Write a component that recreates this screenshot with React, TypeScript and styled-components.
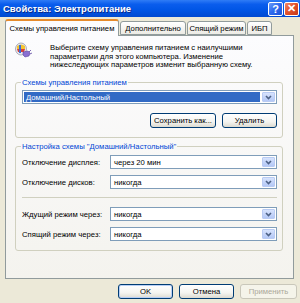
import React from 'react'
import styled, { createGlobalStyle } from 'styled-components'

const GlobalStyle = createGlobalStyle`
  html, body {
    margin: 0;
    padding: 0;
  }
  body {
    width: 300px;
    height: 303px;
    overflow: hidden;
    font-family: "Liberation Sans", Arial, sans-serif;
    font-size: 7.7px;
    color: #000;
  }
  * { box-sizing: border-box; }
`

const Window = styled.div`
  width: 300px;
  height: 303px;
  background: #ece9d8;
  display: flex;
  flex-direction: column;
`

const TitleBar = styled.div`
  height: 17px;
  flex: none;
  display: flex;
  align-items: center;
  padding: 0 1px 0 3px;
  background: linear-gradient(to bottom, #2f7cf6 0%, #0a5ded 25%, #0055e5 60%, #0049d0 100%);
`

const Title = styled.div`
  flex: 1;
  color: #fff;
  font-weight: bold;
  font-size: 9.5px;
  text-shadow: 1px 1px 0 #0a2a8a;
`

const CaptionButton = styled.div<{ $close?: boolean }>`
  width: 15px;
  height: 14px;
  margin-left: 1px;
  border: 1px solid #fff;
  border-radius: 2px;
  display: flex;
  align-items: center;
  justify-content: center;
  color: #fff;
  font-weight: bold;
  font-size: 11px;
  background: ${p => p.$close
    ? 'linear-gradient(135deg, #f08a6a 0%, #e2532b 45%, #c7391a 100%)'
    : 'linear-gradient(135deg, #6e9cf7 0%, #2f6cf0 45%, #1c50d6 100%)'};
`

const TabStrip = styled.div`
  display: flex;
  align-items: flex-end;
  height: 16px;
  margin-top: 2px;
  padding-left: 5px;
  flex: none;
  position: relative;
  z-index: 1;
`

const Tab = styled.div<{ $active?: boolean; $w: number }>`
  width: ${p => p.$w}px;
  height: ${p => (p.$active ? 17 : 14)}px;
  margin-right: 1px;
  margin-bottom: ${p => (p.$active ? -1 : 0)}px;
  display: flex;
  align-items: center;
  justify-content: center;
  white-space: nowrap;
  border: 1px solid #919b9c;
  border-bottom: ${p => (p.$active ? 'none' : '1px solid #919b9c')};
  border-top: ${p => (p.$active ? '2px solid #e68b2c' : '1px solid #919b9c')};
  border-radius: 3px 3px 0 0;
  background: ${p => (p.$active ? '#fcfcfe' : 'linear-gradient(to bottom, #ffffff, #ecebe5)')};
`

const Panel = styled.div`
  height: 244px;
  margin: 0 6px 0 5px;
  border: 1px solid #919b9c;
  background: linear-gradient(to bottom, #fcfcfe, #f4f3ee);
  display: flex;
  flex-direction: column;
  flex: none;
`

const Intro = styled.div`
  display: flex;
  padding: 6px 0 0 8px;
  height: 42px;
  flex: none;
`

const IconBox = styled.div`
  width: 18px;
  margin-right: 18px;
  flex: none;
`

const IntroText = styled.div`
  line-height: 8.7px;
  padding-top: 2px;
`

const Group = styled.fieldset<{ $h: number; $top?: number }>`
  margin: ${p => p.$top ?? 0}px 10px 0 9px;
  height: ${p => p.$h}px;
  flex: none;
  padding: 0 5px 0 6px;
  border: 1px solid #d0d0bf;
  border-radius: 3px;
  display: flex;
  flex-direction: column;
`

const Legend = styled.legend`
  color: #0046d5;
  padding: 0 1px;
  margin-left: -1px;
  line-height: 9px;
`

const Combo = styled.div`
  height: 14px;
  display: flex;
  align-items: stretch;
  border: 1px solid #7f9db9;
  background: #fff;
  flex: 1;
`

const ComboText = styled.div<{ $selected?: boolean }>`
  flex: 1;
  display: flex;
  align-items: center;
  padding-left: 2px;
  margin: 1px;
  background: ${p => (p.$selected ? '#316ac5' : 'transparent')};
  color: ${p => (p.$selected ? '#fff' : '#000')};
`

const ComboButton = styled.div`
  width: 13px;
  margin: 1px;
  border: 1px solid #b9cbf3;
  border-radius: 1px;
  background: linear-gradient(to bottom, #d7e3fd, #b4c8f6);
  display: flex;
  align-items: center;
  justify-content: center;
`

const SchemeRow = styled.div`
  display: flex;
  margin-top: 3px;
`

const ButtonRow = styled.div<{ $gap: number }>`
  display: flex;
  justify-content: flex-end;
  gap: ${p => p.$gap}px;
  margin-top: 9px;
`

const Button = styled.div<{ $w: number; $disabled?: boolean; $default?: boolean }>`
  width: ${p => p.$w}px;
  height: 15px;
  display: flex;
  align-items: center;
  justify-content: center;
  border: 1px solid ${p => (p.$disabled ? '#c9c7ba' : '#003c74')};
  border-radius: 3px;
  color: ${p => (p.$disabled ? '#aca899' : '#000')};
  background: ${p => (p.$disabled ? '#f5f4ea' : 'linear-gradient(to bottom, #ffffff 0%, #f4f4f0 60%, #dcdad0 100%)')};
  box-shadow: ${p => (p.$default ? 'inset 0 0 0 1px #b7cff5' : 'none')};
  white-space: nowrap;
`

const SettingRow = styled.div<{ $top: number }>`
  display: flex;
  align-items: center;
  height: 14px;
  margin-top: ${p => p.$top}px;
`

const SettingLabel = styled.div`
  width: 88px;
  flex: none;
  white-space: nowrap;
`

const Separator = styled.div`
  height: 1px;
  background: #d0d0bf;
  margin: 8px 0 9px;
`

const Footer = styled.div`
  display: flex;
  justify-content: flex-end;
  gap: 6px;
  padding: 5px 3px 0 0;
`

const Chevron = () => (
  <svg width="7" height="5" viewBox="0 0 7 5">
    <path d="M1 1 L3.5 3.5 L6 1" fill="none" stroke="#4d6185" strokeWidth="1.6" />
  </svg>
)

const PowerIcon = () => (
  <svg width="18" height="17" viewBox="0 0 18 17">
    <ellipse cx="7" cy="7" rx="5.5" ry="6" fill="#e9e9ef" stroke="#9a9aa8" strokeWidth="0.8" />
    <path d="M3 4 Q7 1 11 4 L11 7 L3 7 Z" fill="#f4c430" />
    <path d="M3 7 L11 7 L10 10 L4 10 Z" fill="#d8403a" />
    <rect x="5" y="3" width="2" height="8" fill="#3a6fd8" />
    <path d="M9 10 L14 9 L16 11 L15 14 L11 15 L9 13 Z" fill="#8a6fd1" stroke="#5a44a0" strokeWidth="0.6" />
    <path d="M15 10 L17 8 M16 12 L18 11" stroke="#5a44a0" strokeWidth="0.8" />
  </svg>
)

const ComboBox = ({ value, selected }: { value: string; selected?: boolean }) => (
  <Combo>
    <ComboText $selected={selected}>{value}</ComboText>
    <ComboButton>
      <Chevron />
    </ComboButton>
  </Combo>
)

const settings = [
  { label: 'Отключение дисплея:', value: 'через 20 мин' },
  { label: 'Отключение дисков:', value: 'никогда' },
]

const sleepSettings = [
  { label: 'Ждущий режим через:', value: 'никогда' },
  { label: 'Спящий режим через:', value: 'никогда' },
]

const tabs = [
  { title: 'Схемы управления питанием', w: 114 },
  { title: 'Дополнительно', w: 66 },
  { title: 'Спящий режим', w: 59 },
  { title: 'ИБП', w: 25 },
]

const App = () => {
  return (
    <>
      <GlobalStyle />
      <Window>
        <TitleBar>
          <Title>Свойства: Электропитание</Title>
          <CaptionButton>?</CaptionButton>
          <CaptionButton $close>✕</CaptionButton>
        </TitleBar>

        <TabStrip>
          {tabs.map((t, i) => (
            <Tab key={t.title} $w={t.w} $active={i === 0}>{t.title}</Tab>
          ))}
        </TabStrip>

        <Panel>
          <Intro>
            <IconBox>
              <PowerIcon />
            </IconBox>
            <IntroText>
              Выберите схему управления питанием с наилучшими<br />
              параметрами для этого компьютера. Изменение<br />
              нижеследующих параметров изменит выбранную схему.
            </IntroText>
          </Intro>

          <Group $h={60}>
            <Legend>Схемы управления питанием</Legend>
            <SchemeRow>
              <ComboBox value="Домашний/Настольный" selected />
            </SchemeRow>
            <ButtonRow $gap={6}>
              <Button $w={66}>Сохранить как...</Button>
              <Button $w={55}>Удалить</Button>
            </ButtonRow>
          </Group>

          <Group $h={109} $top={4}>
            <Legend>Настройка схемы "Домашний/Настольный"</Legend>
            {settings.map((s, i) => (
              <SettingRow key={s.label} $top={i === 0 ? 4 : 6}>
                <SettingLabel>{s.label}</SettingLabel>
                <ComboBox value={s.value} />
              </SettingRow>
            ))}
            <Separator />
            {sleepSettings.map((s, i) => (
              <SettingRow key={s.label} $top={i === 0 ? 0 : 6}>
                <SettingLabel>{s.label}</SettingLabel>
                <ComboBox value={s.value} />
              </SettingRow>
            ))}
          </Group>
        </Panel>

        <Footer>
          <Button $w={55} $default>OK</Button>
          <Button $w={55}>Отмена</Button>
          <Button $w={57} $disabled>Применить</Button>
        </Footer>
      </Window>
    </>
  )
}

export default App
